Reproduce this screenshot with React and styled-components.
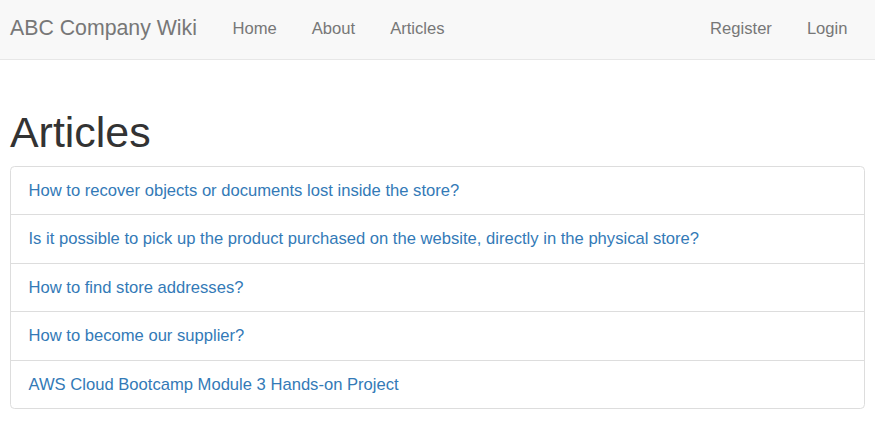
import React from 'react'
import styled, { createGlobalStyle } from 'styled-components'

const articles = [
  'How to recover objects or documents lost inside the store?',
  'Is it possible to pick up the product purchased on the website, directly in the physical store?',
  'How to find store addresses?',
  'How to become our supplier?',
  'AWS Cloud Bootcamp Module 3 Hands-on Project',
]

export default function App() {
  return (
    <>
      <GlobalStyle />
      <Navbar>
        <Brand href="#">ABC Company Wiki</Brand>
        <NavList>
          <NavLink href="#">Home</NavLink>
          <NavLink href="#">About</NavLink>
          <NavLink href="#">Articles</NavLink>
        </NavList>
        <NavList $right>
          <NavLink href="#">Register</NavLink>
          <NavLink href="#">Login</NavLink>
        </NavList>
      </Navbar>
      <Container>
        <Title>Articles</Title>
        <ListGroup>
          {articles.map((title) => (
            <ListItem key={title} href="#">{title}</ListItem>
          ))}
        </ListGroup>
      </Container>
    </>
  )
}

const GlobalStyle = createGlobalStyle`
  * { box-sizing: border-box; }
  body {
    margin: 0;
    background: #ffffff;
    font-family: "Liberation Sans", Arial, Helvetica, sans-serif;
    font-size: 16.6px;
    line-height: 23.4px;
    color: #333333;
  }
`

const Navbar = styled.nav`
  display: flex;
  align-items: center;
  height: 60px;
  padding: 0 10px;
  background-color: #f8f8f8;
  border-bottom: 1px solid #e7e7e7;
`

const Brand = styled.a`
  display: block;
  padding: 17px 18px 18px 0;
  font-size: 21.3px;
  line-height: 23.4px;
  color: #777777;
  text-decoration: none;
`

const NavList = styled.div`
  display: flex;
  margin-left: ${(p) => (p.$right ? 'auto' : '0')};
`

const NavLink = styled.a`
  display: block;
  padding: 17px 17.5px 18px;
  color: #777777;
  text-decoration: none;
  line-height: 23.4px;
`

const Container = styled.main`
  padding: 0 10px;
`

const Title = styled.h1`
  margin: 49px 0 11px;
  font-size: 42.9px;
  font-weight: 500;
  line-height: 46px;
  color: #333333;
`

const ListGroup = styled.div`
  display: flex;
  flex-direction: column;
  border: 1px solid #dddddd;
  border-radius: 4.5px;
  background: #ffffff;
`

const ListItem = styled.a`
  display: block;
  padding: 12px 17.5px;
  color: #337ab7;
  text-decoration: none;
  border-top: 1px solid #dddddd;

  &:first-child {
    border-top: none;
  }
`
